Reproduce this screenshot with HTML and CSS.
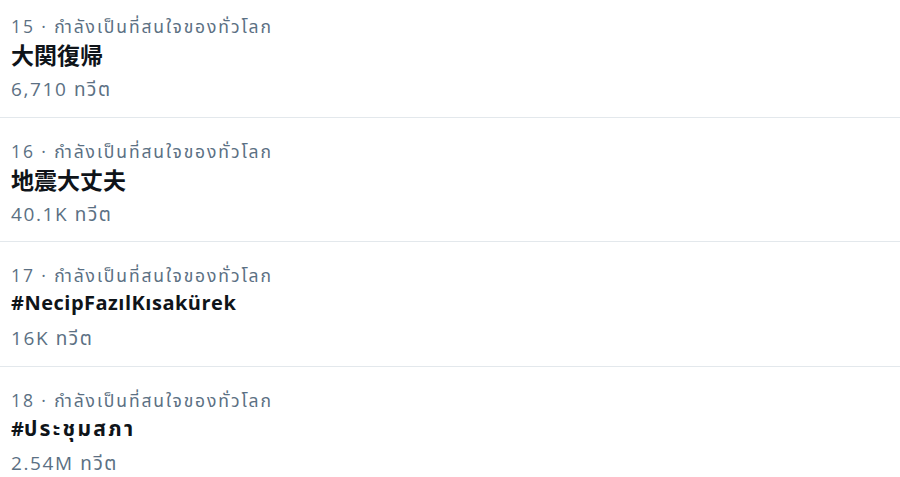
FILE: index.html
```html
<!DOCTYPE html>
<html lang="th">
<head>
<meta charset="utf-8">
<link rel="stylesheet" href="styles.css">
</head>
<body>
<div class="list">
  <div class="trend">
    <div class="meta">15 · กำลังเป็นที่สนใจของทั่วโลก</div>
    <div class="title cjk">大関復帰</div>
    <div class="count">6,710 ทวีต</div>
  </div>
  <div class="trend">
    <div class="meta">16 · กำลังเป็นที่สนใจของทั่วโลก</div>
    <div class="title cjk">地震大丈夫</div>
    <div class="count">40.1K ทวีต</div>
  </div>
  <div class="trend">
    <div class="meta">17 · กำลังเป็นที่สนใจของทั่วโลก</div>
    <div class="title latin">#NecipFazılKısakürek</div>
    <div class="count">16K ทวีต</div>
  </div>
  <div class="trend">
    <div class="meta">18 · กำลังเป็นที่สนใจของทั่วโลก</div>
    <div class="title">#<span class="th">ประชุมสภา</span></div>
    <div class="count">2.54M ทวีต</div>
  </div>
</div>
</body>
</html>
```
FILE: styles.css
```css
html, body {
  margin: 0;
  padding: 0;
  background: #ffffff;
}
body {
  font-family: "Open Sans", "Noto Sans Thai", "Noto Sans", sans-serif;
  overflow: hidden;
}
.list {
  display: flex;
  flex-direction: column;
}
.trend {
  padding: 21px 11px 12.5px;
  border-bottom: 1px solid #e3e8ec;
}
.trend:first-child {
  padding-top: 14px;
}
.meta {
  font-size: 17.5px;
  letter-spacing: 1.9px;
  line-height: 24px;
  height: 24px;
  color: #5b7083;
  white-space: nowrap;
}
.title {
  font-size: 20px;
  line-height: 32px;
  height: 36px;
  font-weight: 700;
  color: #0f1419;
  white-space: nowrap;
}
.title.latin {
  letter-spacing: 0.5px;
}
.title.cjk {
  font-family: "Noto Sans CJK JP", sans-serif;
  font-size: 23px;
}
.th {
  font-size: 21px;
  letter-spacing: 2.3px;
}
.count {
  font-size: 19px;
  letter-spacing: 1.6px;
  line-height: 30px;
  height: 30px;
  color: #5b7083;
  white-space: nowrap;
}
```
